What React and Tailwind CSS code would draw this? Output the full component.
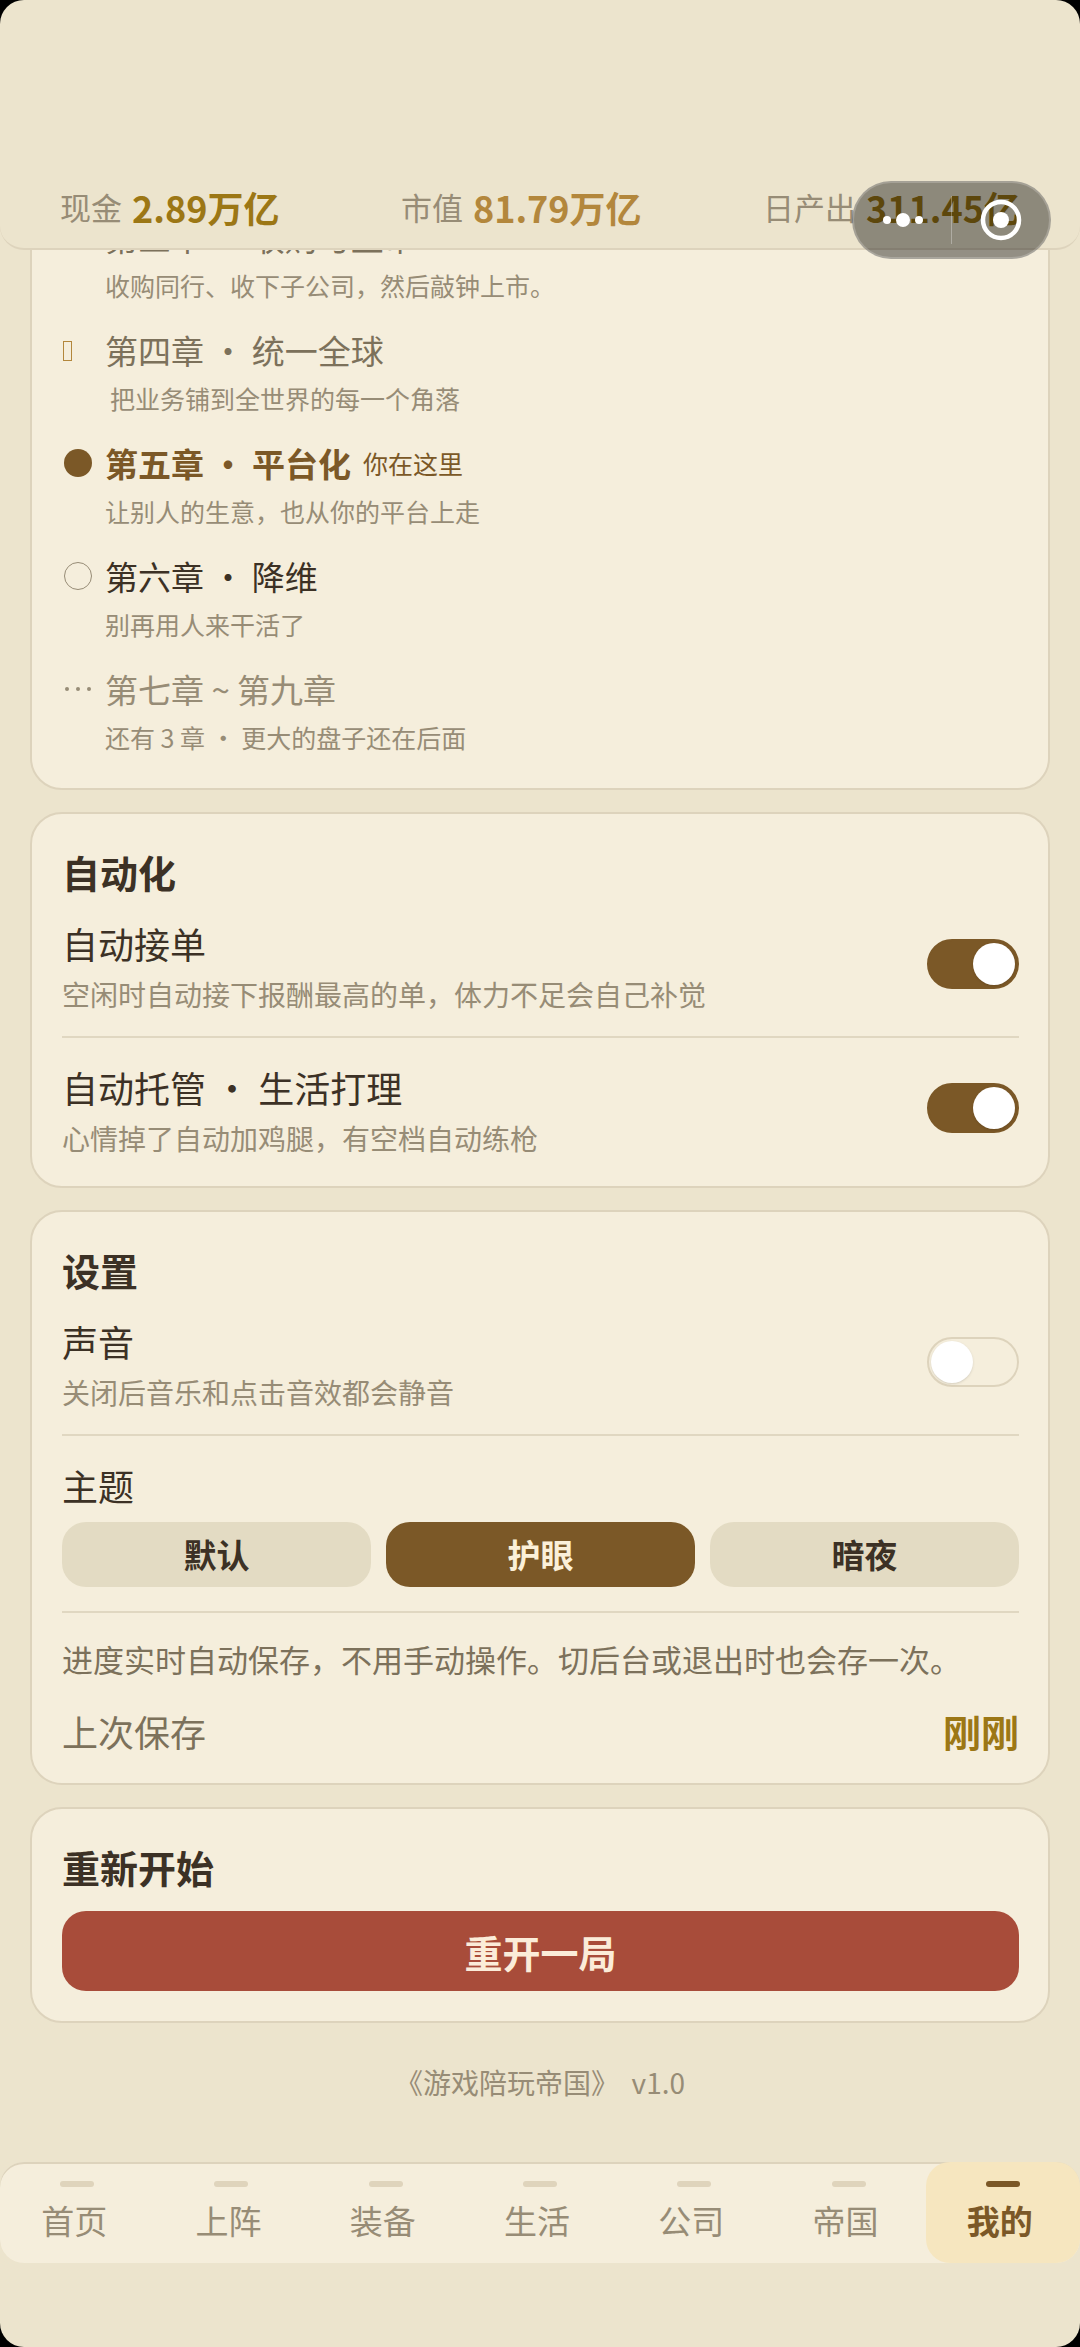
import React, { useState } from 'react';
import clsx from 'clsx';

const STATS = [
  { label: '现金', value: '2.89万亿', color: 'text-[#9c7715]' },
  { label: '市值', value: '81.79万亿', color: 'text-[#b3873c]' },
  { label: '日产出', value: '311.45亿', color: 'text-[#9c7715]' },
];

const CHAPTERS = [
  { state: 'done', title: '第三章 · 收购与上市', hint: '收购同行、收下子公司，然后敲钟上市。' },
  { state: 'done', title: '第四章 · 统一全球', hint: '\u2009把业务铺到全世界的每一个角落' },
  { state: 'current', title: '第五章 · 平台化', hint: '让别人的生意，也从你的平台上走' },
  { state: 'next', title: '第六章 · 降维', hint: '别再用人来干活了' },
  { state: 'locked', title: '第七章 ~ 第九章', hint: '还有 3 章 · 更大的盘子还在后面' },
];

const TITLE_STYLE = {
  done: 'text-[#7c715b]',
  current: 'font-bold text-[#7b5827]',
  next: 'text-[#3c3125]',
  locked: 'text-[#978c76]',
};

const THEMES = ['默认', '护眼', '暗夜'];
const TABS = ['首页', '上阵', '装备', '生活', '公司', '帝国', '我的'];

const Capsule = () => (
  <div className="absolute top-[181px] right-[29px] z-10 flex h-[78px] w-[199px] items-center rounded-full border-2 border-white/20 bg-black/40">
    <button type="button" aria-label="更多" className="flex h-full flex-1 items-center justify-center">
      <svg width="42" height="16" viewBox="0 0 42 16" fill="#fff">
        <circle cx="5" cy="8" r="4" />
        <circle cx="21" cy="8" r="7" />
        <circle cx="37" cy="8" r="4" />
      </svg>
    </button>
    <span className="h-12 w-px bg-white/30" />
    <button type="button" aria-label="关闭" className="flex h-full flex-1 items-center justify-center">
      <svg width="42" height="42" viewBox="0 0 42 42">
        <circle cx="21" cy="21" r="18" fill="none" stroke="#fff" strokeWidth="4.5" />
        <circle cx="21" cy="21" r="8" fill="#fff" />
      </svg>
    </button>
  </div>
);

const Header = () => (
  <header className="shrink-0 rounded-b-3xl border-b-2 border-[#ddd3bc] px-[60px] pt-[182px] pb-4">
    <dl className="flex justify-between leading-[50px]">
      {STATS.map((s) => (
        <div key={s.label} className="flex items-center gap-2.5">
          <dt className="text-[31px] text-[#978c76]">{s.label}</dt>
          <dd className={clsx('text-[36px] font-bold', s.color)}>{s.value}</dd>
        </div>
      ))}
    </dl>
  </header>
);

const Card = ({ title, children }) => (
  <section className="rounded-[32px] border-2 border-[#ddd3bc] bg-[#f5eedc] py-[30px] pr-[29px] pl-[30px]">
    {title && <h2 className="mb-4 text-[38px] leading-[56px] font-bold">{title}</h2>}
    {children}
  </section>
);

const ChapterMark = ({ state }) => {
  if (state === 'done') {
    return <span className="mt-0.5 ml-px h-5 w-[9px] border border-[#b3873c]" />;
  }
  if (state === 'current') {
    return <span className="ml-0.5 size-7 rounded-full bg-[#7b5827]" />;
  }
  if (state === 'next') {
    return <span className="ml-0.5 size-7 rounded-full border border-[#978c76]" />;
  }
  return (
    <svg className="ml-0.5" width="28" height="6" viewBox="0 0 28 6" fill="#978c76">
      <circle cx="3" cy="3" r="2" />
      <circle cx="14" cy="3" r="2" />
      <circle cx="25" cy="3" r="2" />
    </svg>
  );
};

const Chapter = ({ state, title, hint }) => (
  <li className="flex">
    <span className="flex h-[46px] w-[43px] shrink-0 items-center">
      <ChapterMark state={state} />
    </span>
    <div>
      <p className="flex items-center gap-3 leading-[46px]">
        <span className={clsx('text-[33px]', TITLE_STYLE[state])}>{title}</span>
        {state === 'current' && <span className="text-[25px] text-[#7b5827]">你在这里</span>}
      </p>
      <p className="mt-1 text-[25px] leading-[42px] text-[#978c76]">{hint}</p>
    </div>
  </li>
);

const Divider = () => <hr className="mt-6 mb-[22px] border-t-2 border-[#e0d7c1]" />;

const ToggleRow = ({ id, title, hint, defaultChecked }) => (
  <div className="flex items-center justify-between">
    <label htmlFor={id}>
      <span className="block text-[36px] leading-[54px]">{title}</span>
      <span className="mt-1.5 block text-[28px] leading-9 text-[#978c76]">{hint}</span>
    </label>
    <input
      id={id}
      type="checkbox"
      role="switch"
      defaultChecked={defaultChecked}
      className="h-[50px] w-[92px] shrink-0 appearance-none rounded-full border-2 border-[#ddd3bc] p-0.5 before:block before:size-[42px] before:rounded-full before:bg-white before:shadow-sm before:content-[''] checked:border-[#7b5827] checked:bg-[#7b5827] checked:before:translate-x-[42px]"
    />
  </div>
);

const ThemePicker = () => {
  const [theme, setTheme] = useState('护眼');
  return (
    <div>
      <h3 className="text-[36px] leading-[54px]">主题</h3>
      <div className="mt-2.5 grid grid-cols-3 gap-[15px]">
        {THEMES.map((name) => (
          <button
            key={name}
            type="button"
            aria-pressed={theme === name}
            onClick={() => setTheme(name)}
            className={clsx(
              'h-[65px] rounded-3xl text-[33px] font-bold',
              theme === name ? 'bg-[#7b5827] text-[#fbf0d9]' : 'bg-[#e3dbc3]'
            )}
          >
            {name}
          </button>
        ))}
      </div>
    </div>
  );
};

const TabBar = () => {
  const [active, setActive] = useState('我的');
  return (
    <nav className="mb-[84px] flex shrink-0 rounded-3xl bg-[#f5eedc] shadow-[inset_0_2px_0_#ddd3bc]">
      {TABS.map((tab) => (
        <button
          key={tab}
          type="button"
          onClick={() => setActive(tab)}
          className={clsx(
            'flex flex-1 flex-col items-center gap-[13px] rounded-3xl pt-[19px] pb-[23px]',
            active === tab ? 'bg-[#f6e6bf] font-bold text-[#7b5827]' : 'text-[#978c76]'
          )}
        >
          <span
            className={clsx('h-1.5 w-[34px] rounded-full', active === tab ? 'bg-[#7b5827]' : 'bg-[#dfd4bc]')}
          />
          <span className="pr-1.5 text-[33px] leading-10">{tab}</span>
        </button>
      ))}
    </nav>
  );
};

export default function App() {
  return (
    <div className="h-screen bg-black">
      <div
        lang="zh-CN"
        className="relative flex h-full flex-col overflow-hidden rounded-3xl bg-[#ece4cd] font-['Noto_Sans_CJK_SC',sans-serif] text-[#3c3125]"
      >
        <Capsule />
        <Header />

        {/* column-reverse keeps the list scrolled to its end on open */}
        <main className="flex min-h-0 flex-1 flex-col-reverse overflow-y-auto [scrollbar-width:none]">
          <div className="flex flex-col gap-[22px] px-[30px] pb-[61px]">
            <Card>
              <ul className="flex flex-col gap-[21px]">
                {CHAPTERS.map((c) => (
                  <Chapter key={c.title} {...c} />
                ))}
              </ul>
            </Card>

            <Card title="自动化">
              <ToggleRow
                id="auto-order"
                title="自动接单"
                hint="空闲时自动接下报酬最高的单，体力不足会自己补觉"
                defaultChecked
              />
              <Divider />
              <ToggleRow
                id="auto-life"
                title="自动托管 · 生活打理"
                hint="心情掉了自动加鸡腿，有空档自动练枪"
                defaultChecked
              />
            </Card>

            <Card title="设置">
              <ToggleRow id="sound" title="声音" hint="关闭后音乐和点击音效都会静音" />
              <Divider />
              <ThemePicker />
              <Divider />
              <p className="text-[31px] leading-[48px] text-[#7c715b]">
                进度实时自动保存，不用手动操作。切后台或退出时也会存一次。
              </p>
              <div className="mt-[30px] flex items-center justify-between pb-1 leading-9">
                <span className="text-[36px] text-[#7c715b]">上次保存</span>
                <span className="text-[38px] font-bold text-[#9c7715]">刚刚</span>
              </div>
            </Card>

            <Card title="重新开始">
              <button
                type="button"
                className="block h-20 w-full rounded-3xl bg-[#a84c3a] text-[38px] font-bold text-[#fbecd9]"
              >
                重开一局
              </button>
            </Card>

            <footer className="mt-[18px] text-center text-[28px] leading-[38px] text-[#978c76]">
              《游戏陪玩帝国》&nbsp; v1.0
            </footer>
          </div>
        </main>

        <TabBar />
      </div>
    </div>
  );
}
